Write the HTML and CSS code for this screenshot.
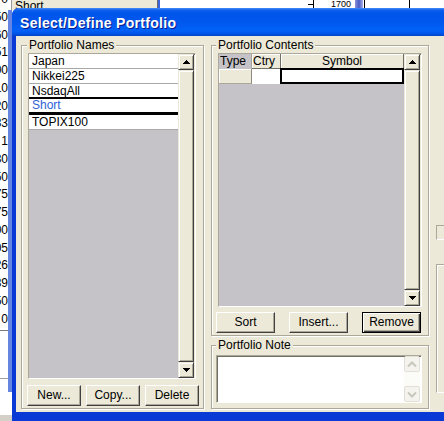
FILE: index.html
```html
<!DOCTYPE html>
<html>
<head>
<meta charset="utf-8">
<title>Select/Define Portfolio</title>
<link rel="stylesheet" href="styles.css">
</head>
<body>
<div class="desk">
  <div class="numcol">
    <div class="nums">
      <div>0</div><div>50</div><div>60</div><div>51</div><div>00</div><div>10</div><div>20</div><div>33</div><div>1</div><div>30</div><div>50</div><div>75</div><div>75</div><div>00</div><div>05</div><div>26</div><div>39</div><div>50</div><div>0</div>
    </div>
    <div class="hl hl1"></div>
    <div class="hl hl2"></div>
  </div>
  <div class="corner"></div>
  <div class="strip"></div>
  <div class="bgcell">Short</div>
  <div class="bgsep"></div>
  <div class="chart">
    <span class="tick-h"></span><span class="tick-v"></span>
    <span class="clabel">1700</span>
    <span class="cbar"></span>
    <span class="cmark"></span>
    <span class="cline"></span>
  </div>
  <div class="bstrip"></div>
</div>

<div class="window">
  <div class="titlebar"><span class="title">Select/Define Portfolio</span></div>
  <div class="client">
    <div class="group g-names">
      <div class="gtitle">Portfolio Names</div>
      <div class="listbox names">
        <div class="items">
          <div class="item">Japan</div>
          <div class="item">Nikkei225</div>
          <div class="item">NsdaqAll</div>
          <div class="item sel">Short</div>
          <div class="item">TOPIX100</div>
        </div>
        <div class="vscroll">
          <div class="sbtn"><svg width="7" height="4" viewBox="0 0 7 4"><path d="M3 0h1v1h1v1h1v1h1v1H0V3h1V2h1V1h1z"/></svg></div>
          <div class="thumb"></div>
          <div class="sbtn"><svg width="7" height="4" viewBox="0 0 7 4"><path d="M0 0h7v1H6v1H5v1H4v1H3V3H2V2H1V1H0z"/></svg></div>
        </div>
      </div>
      <div class="btnrow">
        <button class="btn">New...</button>
        <button class="btn">Copy...</button>
        <button class="btn">Delete</button>
      </div>
    </div>

    <div class="col2">
      <div class="group g-contents">
        <div class="gtitle">Portfolio Contents</div>
        <div class="listbox table">
          <div class="grid">
            <div class="trow">
              <div class="th type">Type</div>
              <div class="th ctry">Ctry</div>
              <div class="th sym">Symbol</div>
            </div>
            <div class="trow">
              <div class="td type"></div>
              <div class="td ctry"></div>
              <div class="td sym"></div>
            </div>
          </div>
          <div class="vscroll">
            <div class="sbtn"><svg width="7" height="4" viewBox="0 0 7 4"><path d="M3 0h1v1h1v1h1v1h1v1H0V3h1V2h1V1h1z"/></svg></div>
            <div class="thumb"></div>
            <div class="sbtn"><svg width="7" height="4" viewBox="0 0 7 4"><path d="M0 0h7v1H6v1H5v1H4v1H3V3H2V2H1V1H0z"/></svg></div>
          </div>
        </div>
        <div class="btnrow spread">
          <button class="btn w59">Sort</button>
          <button class="btn w59">Insert...</button>
          <button class="btn w59 default">Remove</button>
        </div>
      </div>

      <div class="group g-note">
        <div class="gtitle">Portfolio Note</div>
        <div class="listbox note">
          <div class="notetext"></div>
          <div class="vscroll">
            <div class="dbtn"><svg width="10" height="7" viewBox="0 0 10 7"><polyline points="1,5.5 5,1.5 9,5.5" fill="none" stroke="#c9c7bb" stroke-width="2"/></svg></div>
            <div class="dtrack"></div>
            <div class="dbtn"><svg width="10" height="7" viewBox="0 0 10 7"><polyline points="1,1.5 5,5.5 9,1.5" fill="none" stroke="#c9c7bb" stroke-width="2"/></svg></div>
          </div>
        </div>
      </div>
    </div>

    <div class="col3">
      <div class="box box1"></div>
      <div class="box box2"></div>
    </div>
  </div>
</div>
</body>
</html>
```

FILE: styles.css
```css
* { box-sizing: border-box; }
html, body { margin: 0; padding: 0; }
body {
  width: 444px;
  height: 421px;
  overflow: hidden;
  position: relative;
  background: #fff;
  font-family: "Liberation Sans", Arial, sans-serif;
  font-size: 12px;
  color: #000;
}

/* ---------- background application ---------- */
.desk {
  display: grid;
  grid-template-columns: 8px 4px 145px 3px 1fr;
  grid-template-rows: 10px 405px 6px;
  height: 421px;
}
.numcol {
  grid-column: 1;
  grid-row: 1 / 3;
  overflow: hidden;
  display: flex;
  flex-direction: column;
}
.nums {
  margin: -9px 0 0 -32px;
  width: 40px;
  text-align: right;
  line-height: 17.77px;
}
.hl { height: 1px; background: #7d7d7d; width: 8px; }
.hl1 { margin-top: 1px; }
.hl2 { margin-top: 47px; background: #a0a0a0; }
.corner {
  grid-column: 2;
  grid-row: 1;
  border-right: 1px solid #9a9a9a;
}
.strip {
  grid-column: 2;
  grid-row: 2;
  height: 382px;
  background: #6684e2;
}
.bgcell {
  grid-column: 3;
  grid-row: 1;
  background: #ece9d8;
  padding-left: 3px;
  line-height: 12px;
  overflow: visible;
  white-space: nowrap;
}
.bgsep {
  grid-column: 4;
  grid-row: 1;
  border-left: 1px solid #6b6b6b;
  background: #3d64dc;
}
.chart {
  grid-column: 5;
  grid-row: 1;
  position: relative;
  background: #fff;
}
.tick-h { position: absolute; left: 148px; top: 4px; width: 5px; height: 1px; background: #000; }
.tick-v { position: absolute; left: 153px; top: 0; width: 1px; height: 10px; background: #000; }
.clabel { position: absolute; left: 171px; top: 0; font-size: 9px; line-height: 9px; }
.cbar { position: absolute; left: 195px; top: 0; width: 8px; height: 10px; background: linear-gradient(to right, #8a94d8, #4a5cc4 50%, #a8b0e8); }
.cmark { position: absolute; left: 204px; top: 0; width: 3px; height: 10px; border-left: 1px solid #000; }
.cline { position: absolute; left: 249px; top: 0; width: 1px; height: 10px; background: #000; }
.bstrip {
  grid-column: 1 / 3;
  grid-row: 3;
  background: #d4d0c8;
}

/* ---------- dialog window ---------- */
.window {
  position: absolute;
  left: 12px;
  top: 8px;
  width: 470px;
  height: 413px;
  background: #0a3ad6;
  border-radius: 7px 7px 0 0;
  overflow: hidden;
  display: flex;
  flex-direction: column;
}
.titlebar {
  height: 28px;
  flex: none;
  padding: 7px 0 0 8px;
  line-height: 16px;
  background: linear-gradient(to bottom,
    #4a8ef6 0px, #0d5fee 2px, #0055ea 5px, #0057ee 14px,
    #0061f8 22px, #0058ec 25px, #0044cc 28px);
}
.title {
  color: #fff;
  font-weight: bold;
  font-size: 14px;
  letter-spacing: 0.3px;
  text-shadow: 1px 1px 0 #0a1a8a;
}
.client {
  flex: none;
  height: 376px;
  margin-left: 4px;
  background: #ece9d8;
  display: flex;
  align-items: flex-start;
  gap: 7px;
  padding: 9px 0 0 5px;
}

/* group boxes */
.group {
  border: 1px solid #aca899;
  box-shadow: 1px 1px 0 #fff, inset 1px 1px 0 #fff;
  display: flex;
  flex-direction: column;
  flex: none;
}
.gtitle {
  margin: -8px 0 0 4px;
  padding: 0 2px;
  background: #ece9d8;
  line-height: 14px;
  align-self: flex-start;
  white-space: nowrap;
}
.g-names { width: 183px; height: 364px; }
.g-names .gtitle { margin-left: 5px; }
.col2 {
  display: flex;
  flex-direction: column;
  gap: 9px;
  flex: none;
}
.g-contents { width: 218px; height: 291px; }
.g-note { width: 218px; height: 64px; }
.col3 { flex: none; width: 40px; display: flex; flex-direction: column; }

/* sunken list frames */
.listbox {
  border: 1px solid;
  border-color: #aca899 #fff #fff #aca899;
  box-shadow: inset 1px 1px 0 #716f64;
  background: #ece9d8;
  display: grid;
  grid-template-columns: 1fr 16px;
  padding-right: 1px;
}
.names { margin: 1px 0 0 6px; width: 168px; height: 326px; }
.table { margin: 1px 0 0 6px; width: 204px; height: 254px; }
.note  { margin: 3px 0 0 4px; width: 206px; height: 48px; background: #fff; }

.items { background: #c5c3c7; }
.item {
  height: 15px;
  line-height: 14px;
  border-bottom: 1px solid #a9a9a9;
  background: #fff;
  padding-left: 3px;
  white-space: nowrap;
}
.item.sel {
  color: #2f62d6;
  border-top: 2px solid #000;
  border-bottom: 3px solid #000;
  margin-top: -2px;
  height: 18px;
  line-height: 13px;
}

/* scrollbars */
.vscroll { display: flex; flex-direction: column; }
.sbtn, .thumb {
  background: #ece9d8;
  border: 1px solid;
  border-color: #ece9d8 #404040 #404040 #ece9d8;
  box-shadow: inset 1px 1px 0 #fff, inset -1px -1px 0 #aca899;
}
.sbtn {
  height: 16px;
  flex: none;
  display: flex;
  align-items: center;
  justify-content: center;
}
.sbtn svg { display: block; fill: #000; }
.thumb { flex: 1; }
.dbtn {
  height: 16px;
  flex: none;
  background: #f4f3ee;
  border: 1px solid #e2e0d6;
  border-radius: 2px;
  display: flex;
  align-items: center;
  justify-content: center;
}
.dbtn svg { display: block; }
.dtrack { flex: 1; background: #fbfbf8; }

/* contents grid */
.grid { background: #c5c3c7; display: flex; flex-direction: column; }
.trow { display: flex; height: 15px; }
.th {
  background: #ece9d8;
  border-right: 1px solid #716f64;
  border-bottom: 1px solid #716f64;
  box-shadow: inset 1px 1px 0 #fff;
  line-height: 14px;
  padding-left: 1px;
  white-space: nowrap;
  overflow: hidden;
}
.th.type { width: 33px; background: #c5c3c7; box-shadow: none; border-right-color: #a5a39c; border-bottom-color: #c5c3c7; }
.th.ctry { width: 29px; }
.th.sym { flex: 1; text-align: center; padding-left: 0; }
.td.type {
  width: 33px;
  background: #ece9d8;
  border-right: 1px solid #8c8a80;
  border-bottom: 1px solid #aca899;
  box-shadow: inset 1px 1px 0 #fff;
}
.td.ctry { width: 28px; background: #fff; }
.td.sym {
  flex: 1;
  background: #fff;
  border: 2px solid #000;
  margin-top: -1px;
  height: 16px;
}

/* buttons */
.btnrow { display: flex; gap: 5px; margin: 6px 0 0 5px; }
.btnrow.spread { gap: 0; justify-content: space-between; width: 205px; margin: 5px 0 0 4px; }
.btn {
  width: 54px;
  height: 21px;
  padding: 0;
  background: #ece9d8;
  border: 1px solid;
  border-color: #fff #404040 #404040 #fff;
  box-shadow: inset -1px -1px 0 #aca899;
  font-family: "Liberation Sans", Arial, sans-serif;
  font-size: 12px;
  line-height: 19px;
  color: #000;
  text-align: center;
}
.btn.w59 { width: 59px; }
.btn.default {
  border: 1px solid #000;
  box-shadow: inset 1px 1px 0 #fff, inset -1px -1px 0 #404040, inset -2px -2px 0 #aca899;
}

/* partial third column */
.box {
  border: 1px solid;
  border-color: #aca899 #fff #fff #aca899;
  box-shadow: inset 1px 1px 0 #ece9d8;
}
.box1 { margin-top: 180px; height: 15px; }
.box2 { margin-top: 24px; height: 129px; box-shadow: inset 1px 1px 0 #fff; }
```
